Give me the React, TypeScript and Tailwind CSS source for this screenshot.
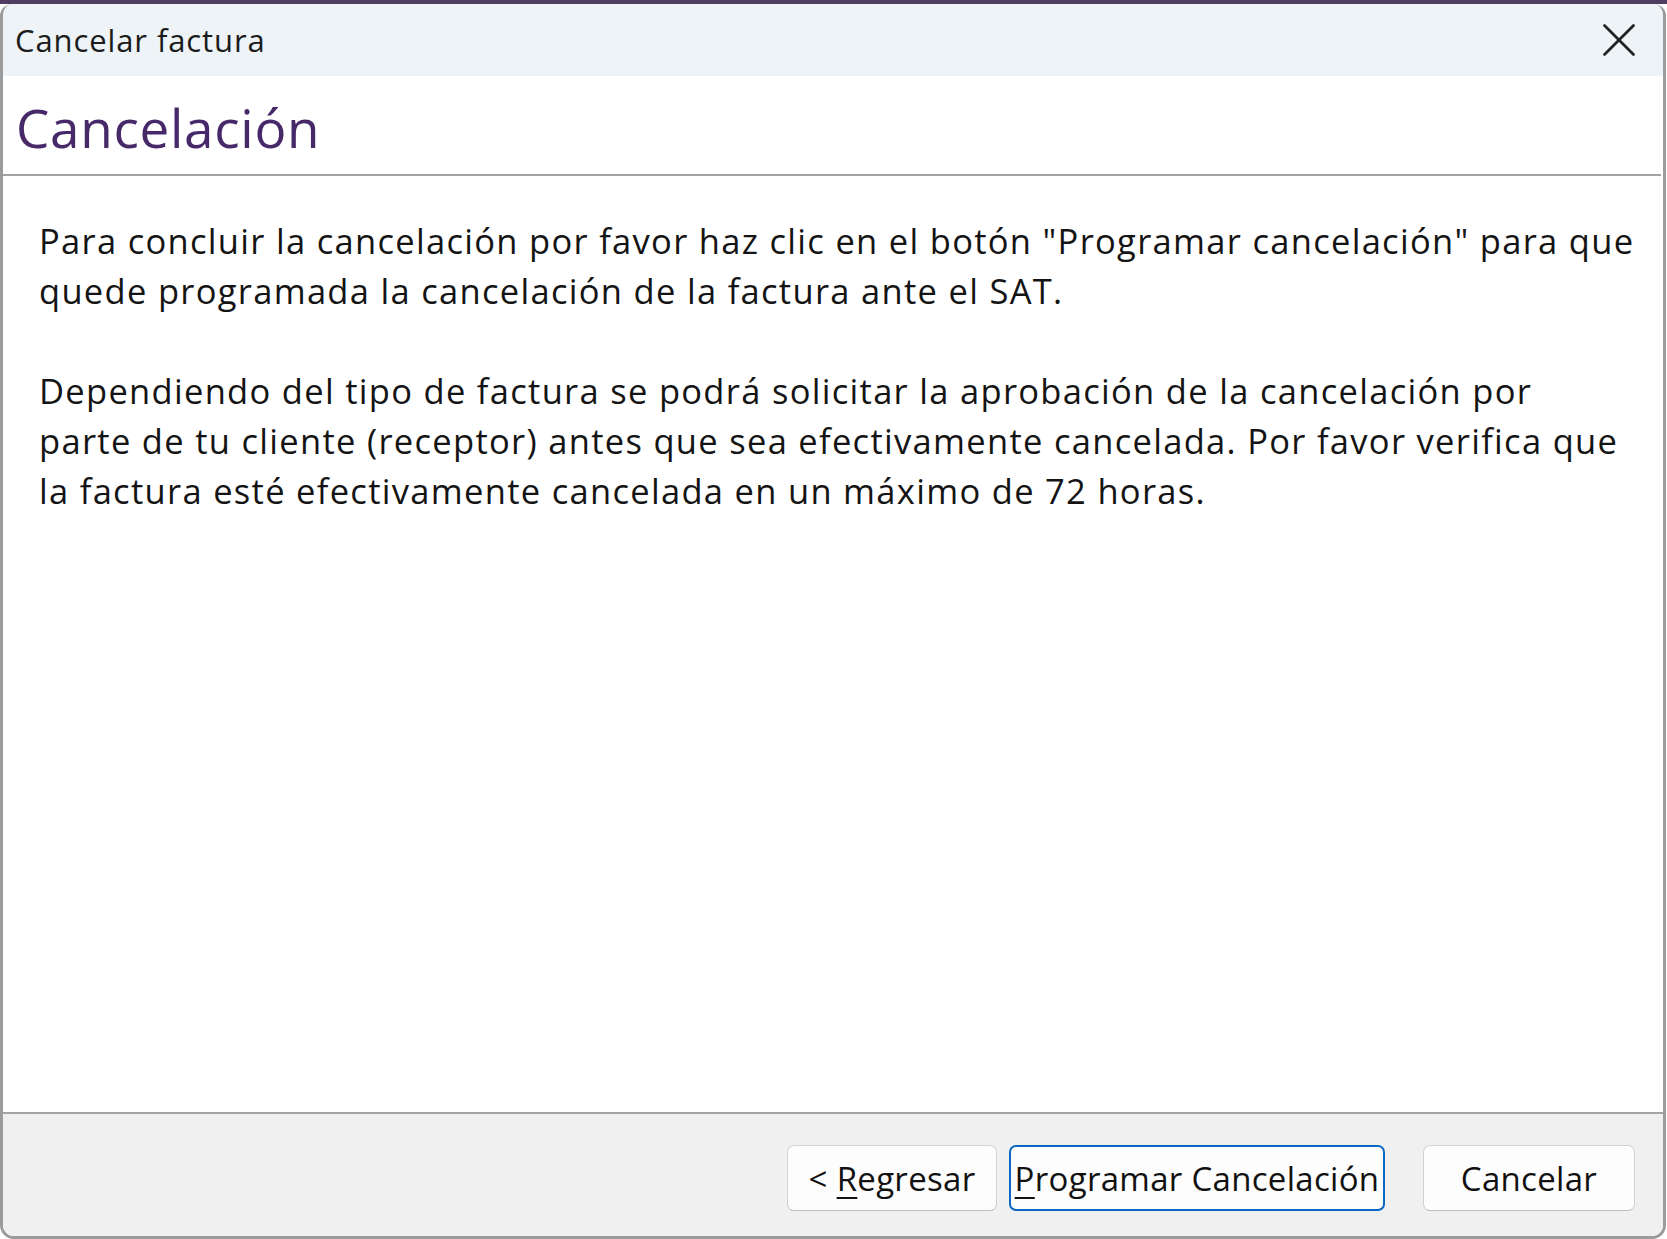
import { X } from "lucide-react";

const font = { fontFamily: '"Open Sans", "Noto Sans", sans-serif' };

export default function App() {
  return (
    <div className="w-[1667px] h-[1239px] bg-white flex flex-col overflow-hidden" style={font}>
      {/* window behind */}
      <div className="h-[4px] bg-[#4f3d62] shrink-0" />
      <div className="flex-1 flex flex-col border-l-[3px] border-r-[3px] border-b-[3px] border-[#9b9b9b] rounded-tl-[12px] rounded-tr-[12px] rounded-b-[14px] overflow-hidden mr-[1px]">
        {/* title bar */}
        <div className="h-[72px] shrink-0 bg-[#edf3f7] flex items-center justify-between pl-[12px] pr-[15px]">
          <span className="text-[31px] text-[#1b1b1b] leading-none tracking-[0.9px]">Cancelar factura</span>
          <X className="w-[58px] h-[58px] text-[#222]" strokeWidth={1.15} />
        </div>
        {/* header */}
        <div className="h-[100px] shrink-0 bg-white flex items-center pl-[13px] pt-[5px] border-b-[2px] border-[#a3a3a3] mr-[2px]">
          <h1 className="text-[53px] text-[#47296a] leading-none font-normal tracking-[0.7px]">Cancelación</h1>
        </div>
        {/* body */}
        <div className="flex-1 bg-white pl-[36px] pt-[40px] text-[34.5px] leading-[50px] text-[#141414] whitespace-nowrap tracking-[1.3px]">
          <p>
            Para concluir la cancelación por favor haz clic en el botón "Programar cancelación" para que
            <br />
            quede programada la cancelación de la factura ante el SAT.
          </p>
          <p className="mt-[50px]">
            Dependiendo del tipo de factura se podrá solicitar la aprobación de la cancelación por
            <br />
            parte de tu cliente (receptor) antes que sea efectivamente cancelada. Por favor verifica que
            <br />
            la factura esté efectivamente cancelada en un máximo de 72 horas.
          </p>
        </div>
        {/* footer */}
        <div className="h-[124px] shrink-0 bg-[#f0f0f0] border-t-[2px] border-[#a3a3a3] flex items-center justify-end pt-[6px] pr-[28px] gap-[12px] text-[33px] text-[#111] tracking-[0.3px]">
          <button className="h-[66px] w-[210px] rounded-[7px] bg-[#fdfdfd] border border-[#d2d2d2] border-b-[#bdbdbd] leading-none">
            &lt; <span className="underline underline-offset-[6px] decoration-[2px]">R</span>egresar
          </button>
          <button className="h-[66px] w-[376px] rounded-[7px] bg-[#fdfdfd] border-[2px] border-[#0a67c3] leading-none mr-[26px]">
            <span className="underline underline-offset-[6px] decoration-[2px]">P</span>rogramar Cancelación
          </button>
          <button className="h-[66px] w-[212px] rounded-[7px] bg-[#fdfdfd] border border-[#d2d2d2] border-b-[#bdbdbd] leading-none">
            Cancelar
          </button>
        </div>
      </div>
    </div>
  );
}
